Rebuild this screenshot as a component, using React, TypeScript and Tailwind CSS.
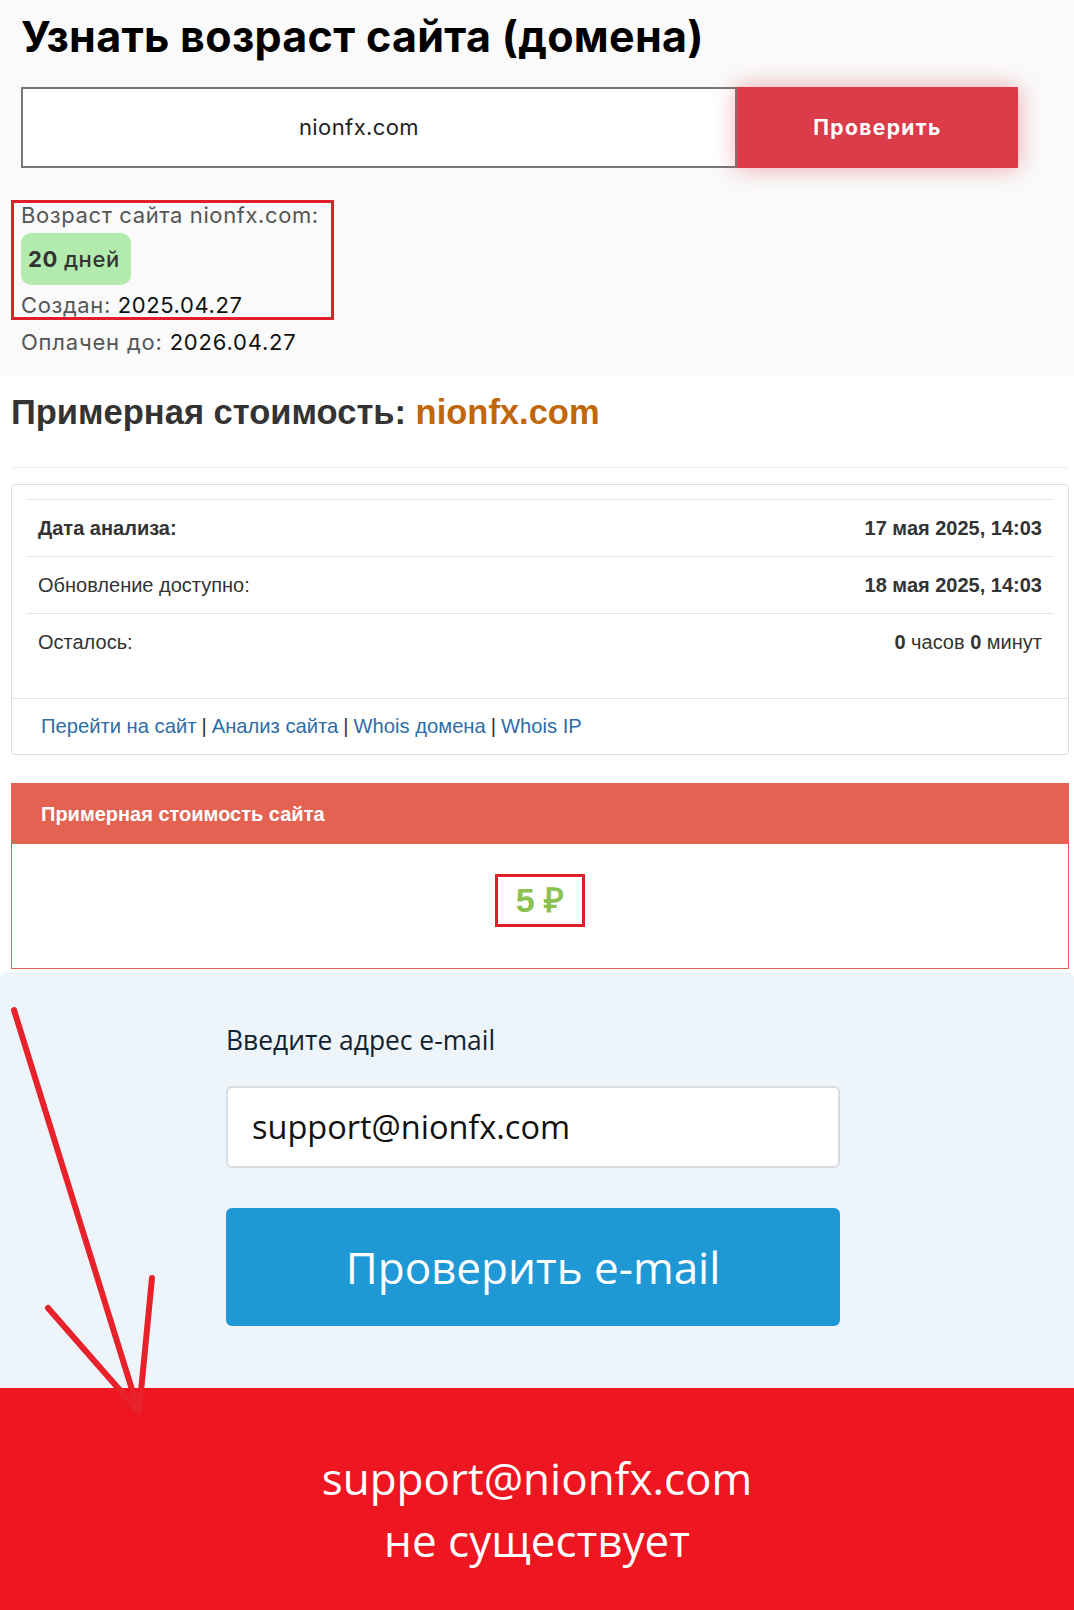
const rows = [
  { label: "Дата анализа:", value: "17 мая 2025, 14:03", strongLabel: true },
  { label: "Обновление доступно:", value: "18 мая 2025, 14:03", strongLabel: false },
];

const links = ["Перейти на сайт", "Анализ сайта", "Whois домена", "Whois IP"];

function ArrowMark() {
  return (
    <svg
      className="pointer-events-none absolute left-0 top-0"
      width="200"
      height="1430"
      viewBox="0 0 200 1430"
    >
      <g stroke="#e8222b" strokeWidth="6" strokeLinecap="round" fill="none">
        <line x1="14" y1="1010" x2="139" y2="1412" />
        <line x1="152" y1="1278" x2="139" y2="1412" />
        <line x1="48" y1="1308" x2="139" y2="1412" />
      </g>
    </svg>
  );
}

export default function App() {
  return (
    <div className="relative min-h-[1610px] w-[1074px] bg-white">
      {/* domain age */}
      <section className="h-[376px] bg-[#fafafa] pl-[21px] pt-[10px] font-['Inter',sans-serif]">
        <h1 className="text-[43px] font-bold leading-[52px] tracking-[0.3px] text-black">
          Узнать возраст сайта (домена)
        </h1>

        <div className="mt-[25px] flex h-[81px] w-[997px]">
          <div className="flex flex-1 items-center justify-center border-2 border-[#777] bg-white pr-[40px] text-[22px] tracking-[0.4px] text-[#222]">
            nionfx.com
          </div>
          <button className="w-[281px] bg-[#dc3b4a] text-[21px] font-bold tracking-[1.4px] text-white shadow-[0_0_22px_rgba(225,60,75,0.45)]">
            Проверить
          </button>
        </div>

        <div className="-ml-[10px] mt-[32px] w-[323px] border-[3px] border-[#e21d2b] pl-[7px] text-[22px] leading-[24px] tracking-[0.6px]">
          <p className="text-[#555]">Возраст сайта nionfx.com:</p>
          <div className="mt-[6px] flex h-[52px] w-[110px] items-center rounded-[10px] bg-[#b3ebae] pl-[7px] text-[#333]">
            <b className="font-bold">20</b>
            <span className="ml-[6px] font-medium">дней</span>
          </div>
          <p className="mt-[8px] text-[#555]">
            Создан: <span className="text-[#111]">2025.04.27</span>
          </p>
        </div>
        <p className="mt-[10px] text-[22px] leading-[24px] tracking-[0.8px] text-[#555]">
          Оплачен до: <span className="text-[#111]">2026.04.27</span>
        </p>
      </section>

      {/* estimated value */}
      <section className="h-[596px] bg-white px-[11px] pt-[16px] font-['Liberation_Sans',Arial,sans-serif]">
        <h2 className="text-[34.5px] font-bold leading-[40px] text-[#333]">
          Примерная стоимость: <span className="text-[#c0670b]">nionfx.com</span>
        </h2>
        <hr className="mt-[35px] w-[1057px] border-t border-[#eee]" />

        <div className="mt-[16px] w-[1058px] rounded-[4px] border border-[#ddd]">
          <div className="px-[14px] pb-[28px] pt-[14px]">
            {rows.map((r) => (
              <div
                key={r.label}
                className="flex h-[57px] items-center justify-between border-t border-[#e5e5e5] px-[12px] text-[20px] text-[#333]"
              >
                <span className={r.strongLabel ? "font-bold" : ""}>{r.label}</span>
                <span className="font-bold">{r.value}</span>
              </div>
            ))}
            <div className="flex h-[57px] items-center justify-between border-t border-[#e5e5e5] px-[12px] text-[20px] text-[#333]">
              <span>Осталось:</span>
              <span>
                <b>0</b> часов <b>0</b> минут
              </span>
            </div>
          </div>
          <div className="flex h-[56px] items-center border-t border-[#e5e5e5] pl-[29px] text-[20.2px] text-[#2e6da4]">
            {links.map((l, i) => (
              <span key={l}>
                {i > 0 && <span className="mx-[5px] text-[#333]">|</span>}
                <a href="#">{l}</a>
              </span>
            ))}
          </div>
        </div>

        <div className="mt-[28px] w-[1058px] border border-[#e06353]">
          <div className="flex h-[60px] items-center bg-[#e36252] pl-[29px] text-[20px] font-bold text-white">
            Примерная стоимость сайта
          </div>
          <div className="flex h-[124px] justify-center bg-white pt-[30px]">
            <div className="flex h-[53px] w-[90px] items-center justify-center border-[3px] border-[#e21d2b] text-[34px] font-bold text-[#8cc152]">
              5 ₽
            </div>
          </div>
        </div>
      </section>

      {/* email check */}
      <section className="h-[416px] rounded-t-[6px] bg-[#eef5fa] pl-[226px] pt-[52px] font-['Open_Sans',sans-serif]">
        <p className="text-[26.4px] font-medium leading-[32px] text-[#13222f]">Введите адрес e-mail</p>
        <div className="mt-[30px] flex h-[82px] w-[614px] items-center rounded-[6px] border-2 border-[#d8dcdf] bg-white pl-[24px] text-[32.5px] text-[#111]">
          support@nionfx.com
        </div>
        <button className="mt-[40px] flex h-[118px] w-[614px] items-center justify-center rounded-[6px] bg-[#1f98d6] text-[44px] text-white">
          Проверить e-mail
        </button>
      </section>

      {/* result */}
      <section className="h-[222px] bg-[#ee1620] pt-[59px] text-center font-['Open_Sans',sans-serif] text-[44px] font-medium leading-[62px] text-white">
        <p>support@nionfx.com</p>
        <p>не существует</p>
      </section>

      <ArrowMark />
    </div>
  );
}
